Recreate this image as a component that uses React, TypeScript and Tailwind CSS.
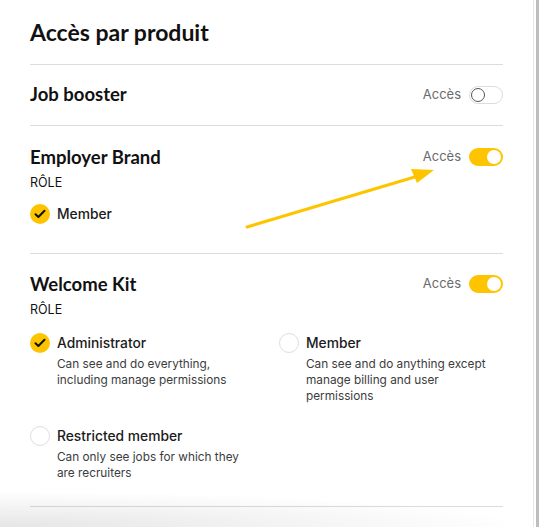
import React from 'react';

const HEAD = "font-['Lato','Noto_Sans',sans-serif]";
const BODY = "font-['Inter','Liberation_Sans',sans-serif]";

function Toggle({ on }: { on: boolean }) {
  return <div className="flex items-center gap-2">
    <span className={`${BODY} text-[13px] text-[#6b6b6b]`}>Accès</span>
    {on
      ? <span className="flex h-[18px] w-[34px] items-center justify-end rounded-full bg-[#ffc400] px-[2px]"><span className="h-[14px] w-[14px] rounded-full bg-white" /></span>
      : <span className="flex h-[18px] w-[34px] items-center rounded-full border border-[#dcdcdc] bg-white px-[1px]"><span className="h-[14px] w-[14px] rounded-full border border-[#555] bg-white" /></span>}
  </div>;
}

function Radio({ checked, label, desc }: { checked: boolean; label: string; desc?: string }) {
  return <div className="flex gap-[7px]">
    {checked
      ? <span className="flex h-5 w-5 shrink-0 items-center justify-center rounded-full bg-[#ffc400]">
          <svg width="12" height="10" viewBox="0 0 12 10" fill="none"><path d="M1.5 5.2 4.4 8 10.5 1.8" stroke="#111" strokeWidth="2" strokeLinecap="round" strokeLinejoin="round" /></svg>
        </span>
      : <span className="h-5 w-5 shrink-0 rounded-full border border-[#dedede] bg-white" />}
    <div className="pt-[1px]">
      <p className={`${BODY} text-[13.8px] font-medium leading-[18px] text-[#1b1b1b]`}>{label}</p>
      {desc && <p className={`${BODY} mt-[4px] max-w-[190px] text-[11.8px] leading-[16px] text-[#3c3c3c]`}>{desc}</p>}
    </div>
  </div>;
}

export default function App() {
  return <div className="relative flex h-[527px] w-[539px] overflow-hidden bg-white">
    <div className="w-[534px] border-r border-[#e6e6e6] px-[30px]">
      <div className="w-[473px]">
        <h1 className={`${HEAD} pt-[19px] pb-[19px] text-[23px] font-bold leading-[26px] text-[#111]`}>Accès par produit</h1>
        <div className="border-t border-[#dcdcdc]" />

        <div className="flex h-[60px] items-center justify-between">
          <h2 className={`${HEAD} text-[18.5px] font-bold text-[#111]`}>Job booster</h2>
          <Toggle on={false} />
        </div>
        <div className="border-t border-[#dcdcdc]" />

        <div className="pt-[19px] pb-[29px]">
          <div className="flex items-center justify-between">
            <h2 className={`${HEAD} text-[18.5px] font-bold leading-[24px] text-[#111]`}>Employer Brand</h2>
            <Toggle on />
          </div>
          <p className={`${BODY} mt-[5px] text-[12.5px] leading-[18px] text-[#111]`}>RÔLE</p>
          <div className="mt-[12px]"><Radio checked label="Member" /></div>
        </div>
        <div className="border-t border-[#dcdcdc]" />

        <div className="pt-[18px] pb-[25px]">
          <div className="flex items-center justify-between">
            <h2 className={`${HEAD} text-[18.5px] font-bold leading-[24px] text-[#111]`}>Welcome Kit</h2>
            <Toggle on />
          </div>
          <p className={`${BODY} mt-[5px] text-[12.5px] leading-[18px] text-[#111]`}>RÔLE</p>
          <div className="mt-[14px] grid grid-cols-[249px_1fr] gap-y-[22px]">
            <Radio checked label="Administrator" desc="Can see and do everything, including manage permissions" />
            <Radio checked={false} label="Member" desc="Can see and do anything except manage billing and user permissions" />
            <Radio checked={false} label="Restricted member" desc="Can only see jobs for which they are recruiters" />
          </div>
        </div>
        <div className="border-t border-[#dcdcdc]" />
      </div>
    </div>
    <div className="w-[2px] bg-white" />
    <div className="w-[3px] bg-[#bdbdbd]" />

    <svg className="pointer-events-none absolute left-0 top-0" width="539" height="527">
      <line x1="247" y1="227" x2="418" y2="176" stroke="#ffc400" strokeWidth="3" strokeLinecap="round" />
      <polygon points="434,170 411,169 417,183" fill="#ffc400" />
    </svg>
    <div className="pointer-events-none absolute bottom-0 left-0 h-[36px] w-[533px] bg-[radial-gradient(ellipse_at_0%_100%,rgba(0,0,0,0.1),rgba(0,0,0,0)_70%)]" />
  </div>;
}
